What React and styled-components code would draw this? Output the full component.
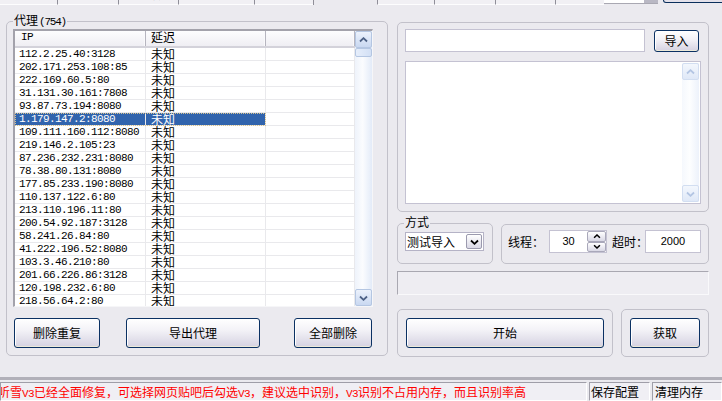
import React from 'react';
import styled, { createGlobalStyle } from 'styled-components';

const cjk = `"Noto Sans CJK SC", "Noto Sans CJK JP", sans-serif`;
const mono = `"Liberation Mono", "DejaVu Sans Mono", monospace`;
const sans = `"Liberation Sans", Arial, sans-serif`;
const BG = '#ebeaef';

const GlobalStyle = createGlobalStyle`
  html, body { margin: 0; padding: 0; background: ${BG}; }
  body { font-family: ${cjk}; font-size: 12px; color: #000; overflow: hidden; }
  #root { width: 722px; height: 401px; }
`;

const Window = styled.div`
  width: 722px;
  height: 401px;
  display: flex;
  flex-direction: column;
  overflow: hidden;
  background: ${BG};
`;

/* ---------- top tab strip (cut off) ---------- */
const TabStrip = styled.div`
  display: flex;
  height: 5px;
  flex: none;
  overflow: hidden;
`;
const Tab = styled.div`
  flex: none;
  width: ${(p) => p.$w}px;
  height: 5px;
  box-sizing: border-box;
  border-left: ${(p) => (p.$first ? 'none' : '1px solid #8f8e98')};
  border-bottom: 1px solid #fdfdfe;
  background: #f1f0f4;
  display: flex;
  justify-content: center;
  overflow: hidden;
`;
const TabLabel = styled.span`
  font: 12px/12px ${cjk};
  margin-top: -12px;
  white-space: nowrap;
`;
const ActiveGap = styled.div`
  flex: none;
  width: ${(p) => p.$w}px;
  border-left: 1px solid #8f8e98;
`;
const ComboStub = styled.div`
  flex: none;
  width: 54px;
  height: 3px;
  display: flex;
  border-bottom: 1px solid #a9a8b2;
`;
const ComboField = styled.div`
  flex: 1;
  background: #fff;
`;
const ComboArrow = styled.div`
  width: 14px;
  background: #b9b8c4;
`;
const ButtonStub = styled.div`
  flex: none;
  margin-left: 5px;
  width: 60px;
  height: 2px;
  border: 1px solid #0a2f5c;
  border-top: none;
  border-radius: 0 0 0 3px;
  background: #e3e1ea;
`;

/* ---------- main area ---------- */
const Main = styled.div`
  flex: 1;
  display: flex;
  align-items: flex-start;
  padding-left: 6px;
  gap: 9px;
`;

const Group = styled.div`
  position: relative;
  flex: none;
  box-sizing: border-box;
  width: ${(p) => p.$w}px;
  height: ${(p) => p.$h}px;
  margin-top: ${(p) => p.$mt || 0}px;
  border: 1px solid #c2c1ca;
  border-radius: 5px;
  padding: ${(p) => p.$pad || '0'};
  display: flex;
  flex-direction: ${(p) => (p.$row ? 'row' : 'column')};
  align-items: flex-start;
`;
const Caption = styled.span`
  position: absolute;
  top: -9px;
  left: 6px;
  padding: 0 1px;
  background: ${BG};
  font: 12px/14px ${cjk};
  white-space: nowrap;
`;
const CaptionNum = styled.span`
  font: 11px/14px ${mono};
  letter-spacing: -1.2px;
  margin-left: 1px;
`;

/* list view */
const ListView = styled.div`
  box-sizing: border-box;
  width: 360px;
  height: 278px;
  flex: none;
  display: flex;
  background: #fff;
  border-style: solid;
  border-width: 2px 1px 1px 2px;
  border-color: #a3a2ab #f6f6f8 #f6f6f8 #a3a2ab;
`;
const ListBody = styled.div`
  flex: 1;
  display: flex;
  flex-direction: column;
  overflow: hidden;
`;
const Header = styled.div`
  display: flex;
  flex: none;
  height: 17px;
  box-sizing: border-box;
  border-bottom: 2px solid #d3d2da;
  background: linear-gradient(#fdfdfe, #efeef3);
`;
const HeadCell = styled.div`
  box-sizing: border-box;
  flex: ${(p) => (p.$w ? 'none' : '1')};
  width: ${(p) => (p.$w ? `${p.$w}px` : 'auto')};
  border-right: 1px solid #b6b5bf;
  box-shadow: inset -1px 0 0 #fafafc;
  padding-left: ${(p) => p.$pad}px;
  line-height: 15px;
  white-space: nowrap;
`;
const Rows = styled.div`
  flex: 1;
  overflow: hidden;
`;
const Row = styled.div`
  display: flex;
  height: 13px;
`;
const Selection = styled.div`
  display: flex;
  flex: none;
  background: ${(p) => (p.$on ? '#3164ad' : 'transparent')};
  color: ${(p) => (p.$on ? '#fff' : '#000')};
  outline: ${(p) => (p.$on ? '1px dotted #d9c38c' : 'none')};
  outline-offset: -1px;
`;
const Cell = styled.div`
  box-sizing: border-box;
  flex: ${(p) => (p.$w ? 'none' : '1')};
  width: ${(p) => (p.$w ? `${p.$w}px` : 'auto')};
  height: 13px;
  padding-left: ${(p) => p.$pad}px;
  border-right: 1px solid #e9e9ec;
  border-bottom: 1px solid #e9e9ec;
  white-space: nowrap;
  overflow: hidden;
  font-size: 12px;
  line-height: 12px;
`;
const Mono = styled.span`
  font: 11px/12px ${mono};
  letter-spacing: -0.6px;
  vertical-align: top;
`;
const CjkText = styled.span`
  font: 12px/12px ${cjk};
  vertical-align: top;
`;

/* scrollbars */
const VScroll = styled.div`
  flex: none;
  width: 17px;
  display: flex;
  flex-direction: column;
  align-items: stretch;
  background: linear-gradient(to right, #eef3fb, #fbfcfe 45%, #e3ebf8);
`;
const ScrollBtn = styled.div`
  flex: none;
  height: 17px;
  box-sizing: border-box;
  border: 1px solid #b4c6e2;
  border-radius: 2px;
  background: linear-gradient(#ecf2fc, #c9d8f1);
  display: flex;
  align-items: center;
  justify-content: center;
  margin-top: ${(p) => (p.$bottom ? 'auto' : '0')};
`;
const Thumb = styled.div`
  flex: none;
  height: 9px;
  box-sizing: border-box;
  border: 1px solid #b4c6e2;
  border-radius: 2px;
  background: linear-gradient(to right, #e6eefb, #d3e0f5);
`;

const Chevron = ({ down, color = '#4d6185', w = 9, h = 6 }) => (
  <svg width={w} height={h} viewBox="0 0 9 6">
    <path
      d={down ? 'M1 1.5 L4.5 4.8 L8 1.5' : 'M1 4.5 L4.5 1.2 L8 4.5'}
      fill="none"
      stroke={color}
      strokeWidth="1.8"
    />
  </svg>
);

/* buttons */
const Button = styled.button`
  flex: none;
  box-sizing: border-box;
  width: ${(p) => p.$w}px;
  height: ${(p) => p.$h || 30}px;
  margin-left: ${(p) => p.$ml || '0'};
  margin-top: ${(p) => p.$mt || '0'};
  padding: 0;
  border: 1px solid #0b3163;
  border-radius: 3px;
  background: linear-gradient(#ffffff, #f3f2f7 40%, #d5d2e1);
  box-shadow: inset 0 -1px 0 #ecead9, inset 1px 1px 0 #ffffff;
  font: 12px/1 ${cjk};
  color: #000;
  cursor: default;
`;
const ButtonRow = styled.div`
  display: flex;
  width: 360px;
  box-sizing: border-box;
  padding: 0 1px;
  margin-top: 11px;
`;

/* right column */
const RightCol = styled.div`
  flex: none;
  width: 312px;
  margin-top: 17px;
  display: flex;
  flex-direction: column;
`;
const InputRow = styled.div`
  display: flex;
  align-items: flex-start;
  gap: 9px;
`;
const Edit = styled.div`
  flex: none;
  box-sizing: border-box;
  width: ${(p) => p.$w}px;
  height: ${(p) => p.$h}px;
  border: 1px solid #c4c2d2;
  background: #fff;
  display: flex;
  align-items: center;
  justify-content: ${(p) => (p.$center ? 'center' : 'flex-start')};
  font: 11px/1 ${sans};
`;
const Memo = styled.div`
  flex: none;
  box-sizing: border-box;
  width: 296px;
  height: 143px;
  margin-top: 9px;
  border: 1px solid #c4c2d2;
  background: #fff;
  display: flex;
  justify-content: flex-end;
  padding: 1px 1px 1px 0;
`;
const MemoScroll = styled(VScroll)`
  background: linear-gradient(to right, #f5f8fd, #fdfeff 45%, #edf2fb);
`;
const PaleBtn = styled(ScrollBtn)`
  border-color: #d2def1;
  background: linear-gradient(#f3f7fd, #dfe8f7);
`;

const OptionRow = styled.div`
  display: flex;
  align-items: flex-start;
  gap: 8px;
  margin-top: 11px;
`;
const Select = styled.div`
  box-sizing: border-box;
  width: 79px;
  height: 19px;
  border: 1px solid #b5b3c6;
  background: #fff;
  display: flex;
  align-items: center;
  justify-content: space-between;
  padding: 0 1px 0 1px;
  font: 12px/1 ${cjk};
`;
const DropBtn = styled.div`
  box-sizing: border-box;
  width: 16px;
  height: 15px;
  border: 1px solid #9b9aae;
  border-radius: 2px;
  background: linear-gradient(#ffffff, #d9d8e5);
  display: flex;
  align-items: center;
  justify-content: center;
`;
const Label = styled.span`
  flex: none;
  width: ${(p) => p.$w}px;
  margin-left: ${(p) => p.$ml || 0}px;
  font: 12px/23px ${cjk};
  white-space: nowrap;
`;
const SpinWrap = styled.div`
  flex: none;
  display: flex;
  box-sizing: border-box;
  width: 58px;
  height: 23px;
  border: 1px solid #c4c2d2;
  background: #fff;
`;
const SpinText = styled.div`
  flex: 1;
  display: flex;
  align-items: center;
  justify-content: center;
  font: 11px/1 ${sans};
`;
const SpinBtns = styled.div`
  width: 19px;
  display: flex;
  flex-direction: column;
`;
const SpinBtn = styled.div`
  flex: 1;
  box-sizing: border-box;
  border: 1px solid #a9a8ba;
  border-radius: 2px;
  background: linear-gradient(#ffffff, #d9d8e5);
  display: flex;
  align-items: center;
  justify-content: center;
`;
const Progress = styled.div`
  box-sizing: border-box;
  width: 312px;
  height: 24px;
  margin-top: 7px;
  border: 1px solid;
  border-color: #a9a8b1 #f9f9fb #f9f9fb #a9a8b1;
  background: #eeedf2;
`;
const ActionRow = styled.div`
  display: flex;
  gap: 8px;
  margin-top: 14px;
`;

/* status bar */
const StatusBar = styled.div`
  flex: none;
  height: 24px;
  box-sizing: border-box;
  border-top: 3px solid #b1b0b9;
  padding-top: 2px;
  display: flex;
  gap: 2px;
  background: ${BG};
`;
const Panel = styled.div`
  flex: none;
  box-sizing: border-box;
  width: ${(p) => p.$w}px;
  height: 19px;
  border-style: solid;
  border-width: 1px;
  border-color: #9f9ea8 #ffffff #ffffff #9f9ea8;
  background: #f0eff4;
  padding-left: ${(p) => p.$pad || 0}px;
  overflow: hidden;
  white-space: nowrap;
  font: 12px/17px ${cjk};
  color: ${(p) => p.$color || '#000'};
`;
const Shift = styled.span`
  display: inline-block;
  margin-left: -3px;
`;
const Ascii = styled.span`
  font: 11px/17px ${mono};
  letter-spacing: -0.6px;
`;

const ips = [
  '112.2.25.40:3128',
  '202.171.253.108:85',
  '222.169.60.5:80',
  '31.131.30.161:7808',
  '93.87.73.194:8080',
  '1.179.147.2:8080',
  '109.111.160.112:8080',
  '219.146.2.105:23',
  '87.236.232.231:8080',
  '78.38.80.131:8080',
  '177.85.233.190:8080',
  '110.137.122.6:80',
  '213.110.196.11:80',
  '200.54.92.187:3128',
  '58.241.26.84:80',
  '41.222.196.52:8080',
  '103.3.46.210:80',
  '201.66.226.86:3128',
  '120.198.232.6:80',
  '218.56.64.2:80',
];

const tabsLeft = [
  { w: 57, t: '账号管理', first: true },
  { w: 61, t: '贴吧签到' },
  { w: 60, t: '回帖顶帖' },
  { w: 76, t: '批量发帖工具' },
  { w: 59, t: '验证' },
];
const tabsRight = [
  { w: 57, t: '设置' },
  { w: 61, t: '帮助' },
  { w: 60, t: '关于' },
  { w: 49, t: '' },
];

export default function App() {
  return (
    <>
      <GlobalStyle />
      <Window>
        <TabStrip>
          {tabsLeft.map((t, i) => (
            <Tab key={i} $w={t.w} $first={t.first}>
              <TabLabel>{t.t}</TabLabel>
            </Tab>
          ))}
          <ActiveGap $w={63} />
          {tabsRight.map((t, i) => (
            <Tab key={i} $w={t.w}>
              <TabLabel>{t.t}</TabLabel>
            </Tab>
          ))}
          <ComboStub>
            <ComboField />
            <ComboArrow />
          </ComboStub>
          <ButtonStub />
        </TabStrip>

        <Main>
          <Group $w={382} $h={335} $mt={16} $pad="7px 0 0 6px">
            <Caption>
              代理<CaptionNum>(754)</CaptionNum>
            </Caption>
            <ListView>
              <ListBody>
                <Header>
                  <HeadCell $w={131} $pad={6}>
                    <Mono>IP</Mono>
                  </HeadCell>
                  <HeadCell $w={120} $pad={5}>
                    <CjkText>延迟</CjkText>
                  </HeadCell>
                  <HeadCell $pad={0} />
                </Header>
                <Rows>
                  {ips.map((ip, i) => (
                    <Row key={ip}>
                      <Selection $on={i === 5}>
                        <Cell $w={131} $pad={4}>
                          <Mono>{ip}</Mono>
                        </Cell>
                        <Cell $w={120} $pad={5}>
                          <CjkText>未知</CjkText>
                        </Cell>
                      </Selection>
                      <Cell $pad={0} />
                    </Row>
                  ))}
                </Rows>
              </ListBody>
              <VScroll>
                <ScrollBtn>
                  <Chevron />
                </ScrollBtn>
                <Thumb />
                <ScrollBtn $bottom>
                  <Chevron down />
                </ScrollBtn>
              </VScroll>
            </ListView>
            <ButtonRow>
              <Button $w={86}>删除重复</Button>
              <Button $w={134} $ml="26px">
                导出代理
              </Button>
              <Button $w={78} $ml="auto">
                全部删除
              </Button>
            </ButtonRow>
          </Group>

          <RightCol>
            <Group $w={312} $h={190} $pad="6px 0 0 7px">
              <InputRow>
                <Edit $w={240} $h={23} />
                <Button $w={45} $h={22} $mt="1px">
                  导入
                </Button>
              </InputRow>
              <Memo>
                <MemoScroll>
                  <PaleBtn>
                    <Chevron color="#b3c5e3" />
                  </PaleBtn>
                  <PaleBtn $bottom>
                    <Chevron down color="#b3c5e3" />
                  </PaleBtn>
                </MemoScroll>
              </Memo>
            </Group>

            <OptionRow>
              <Group $w={96} $h={41} $pad="8px 0 0 7px">
                <Caption>方式</Caption>
                <Select>
                  <span>测试导入</span>
                  <DropBtn>
                    <Chevron down color="#000" />
                  </DropBtn>
                </Select>
              </Group>
              <Group $w={208} $h={40} $mt={1} $pad="5px 0 0 6px" $row>
                <Label $w={41}>线程：</Label>
                <SpinWrap>
                  <SpinText>30</SpinText>
                  <SpinBtns>
                    <SpinBtn>
                      <Chevron color="#000" w={8} h={5} />
                    </SpinBtn>
                    <SpinBtn>
                      <Chevron down color="#000" w={8} h={5} />
                    </SpinBtn>
                  </SpinBtns>
                </SpinWrap>
                <Label $w={33} $ml={5}>
                  超时：
                </Label>
                <Edit $w={56} $h={23} $center>
                  2000
                </Edit>
              </Group>
            </OptionRow>

            <Progress />

            <ActionRow>
              <Group $w={216} $h={48} $pad="8px 0 0 8px">
                <Button $w={198}>开始</Button>
              </Group>
              <Group $w={88} $h={48} $pad="8px 0 0 8px">
                <Button $w={70}>获取</Button>
              </Group>
            </ActionRow>
          </RightCol>
        </Main>

        <StatusBar>
          <Panel $w={587} $color="#ff0000">
            <Shift>
              听雪<Ascii>V3</Ascii>已经全面修复，可选择网页贴吧后勾选<Ascii>V3</Ascii>，建议选中识别，<Ascii>V3</Ascii>识别不占用内存，而且识别率高
            </Shift>
          </Panel>
          <Panel $w={61} $pad={1}>
            保存配置
          </Panel>
          <Panel $w={70} $pad={2}>
            清理内存
          </Panel>
        </StatusBar>
      </Window>
    </>
  );
}
